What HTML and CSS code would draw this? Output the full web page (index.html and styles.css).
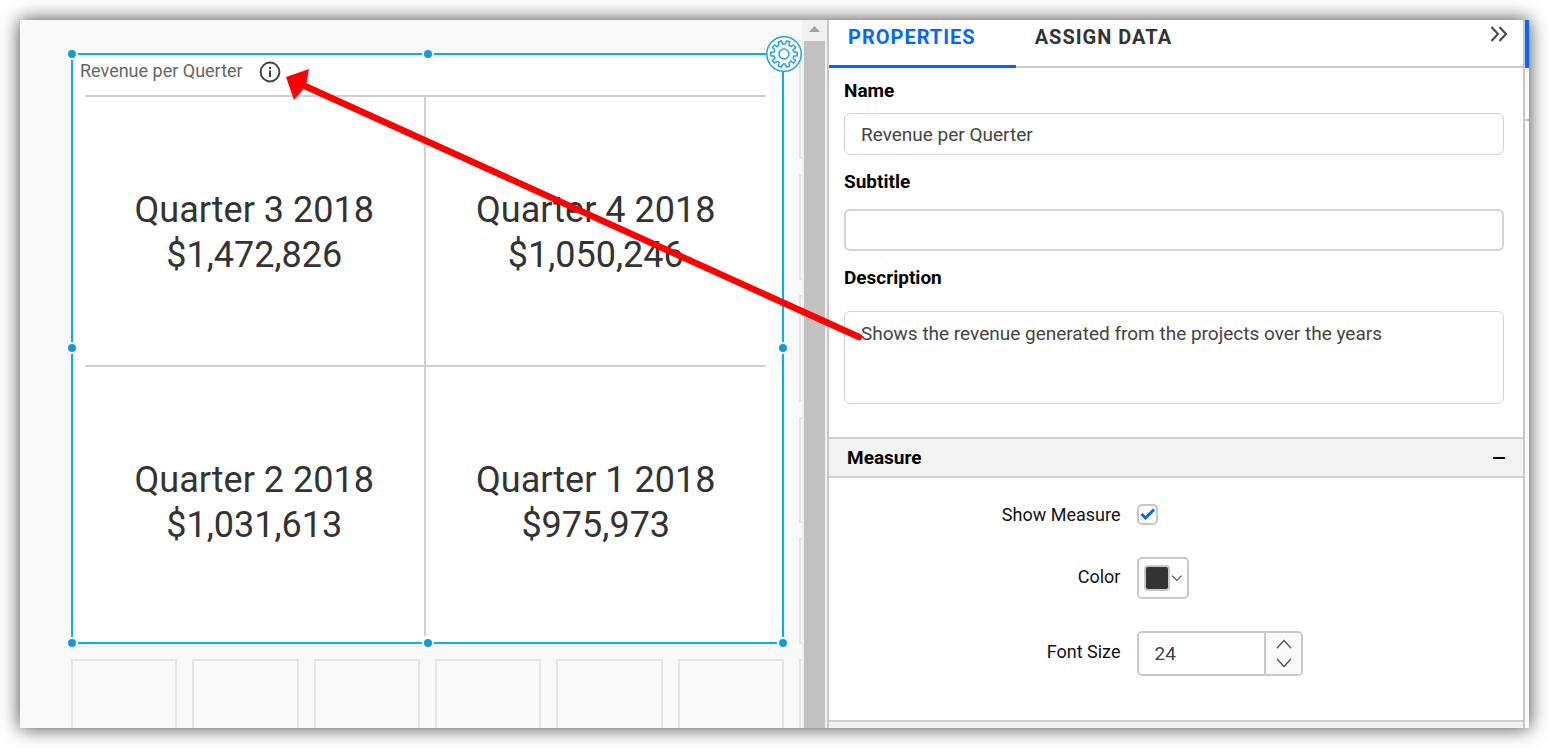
FILE: index.html
```html
<!DOCTYPE html>
<html lang="en">
<head>
<meta charset="utf-8">
<title>Dashboard Designer</title>
<link rel="stylesheet" href="styles.css">
</head>
<body>
<div class="frame">
  <main class="canvas">
    <div class="board">
      <section class="widget">
        <header class="widget-head">
          <h2 class="widget-title">Revenue per Querter</h2>
          <button class="icon-btn" type="button" aria-label="Description">
            <svg class="info-icon" viewBox="0 0 22 22"><circle cx="11" cy="11" r="9.4"/><path d="M11 9.5V16M11 6V8"/></svg>
          </button>
        </header>
        <div class="cards">
          <div class="card"><p>Quarter 3 2018</p><p>$1,472,826</p></div>
          <div class="card"><p>Quarter 4 2018</p><p>$1,050,246</p></div>
          <div class="card"><p>Quarter 2 2018</p><p>$1,031,613</p></div>
          <div class="card"><p>Quarter 1 2018</p><p>$975,973</p></div>
        </div>
        <span class="handle top left"></span>
        <span class="handle top center"></span>
        <span class="handle middle left"></span>
        <span class="handle middle right"></span>
        <span class="handle bottom left"></span>
        <span class="handle bottom center"></span>
        <span class="handle bottom right"></span>
        <button class="gear" type="button" aria-label="Widget settings">
          <svg viewBox="-18 -18 36 36">
            <defs><path id="tooth" d="M-1.900 -9.800 -1.700 -13.100H1.700L1.900 -9.800A10 10 0 0 1 4.230 -9.060"/></defs>
            <circle r="17.200"/><circle r="5"/>
            <use href="#tooth" transform="rotate(18)"/>
            <use href="#tooth" transform="rotate(54)"/>
            <use href="#tooth" transform="rotate(90)"/>
            <use href="#tooth" transform="rotate(126)"/>
            <use href="#tooth" transform="rotate(162)"/>
            <use href="#tooth" transform="rotate(198)"/>
            <use href="#tooth" transform="rotate(234)"/>
            <use href="#tooth" transform="rotate(270)"/>
            <use href="#tooth" transform="rotate(306)"/>
            <use href="#tooth" transform="rotate(342)"/>
          </svg>
        </button>
      </section>
      <div class="cell edge"></div>
      <div class="cell edge"></div>
      <div class="cell edge"></div>
      <div class="cell edge"></div>
      <div class="cell edge"></div>
      <div class="cell last"></div>
      <div class="cell last"></div>
      <div class="cell last"></div>
      <div class="cell last"></div>
      <div class="cell last"></div>
      <div class="cell last"></div>
      <div class="cell last edge"></div>
    </div>
  </main>
  <div class="scrollbar">
    <svg class="scroll-up" viewBox="0 0 21 21"><path d="M5 12 10.500 6 16 12Z"/></svg>
    <div class="thumb"></div>
  </div>
  <aside class="panel">
    <nav class="tabs">
      <button class="tab active" type="button">PROPERTIES</button>
      <button class="tab" type="button">ASSIGN DATA</button>
      <button class="icon-btn collapse" type="button" aria-label="Collapse panel">
        <svg viewBox="0 0 18 16"><path d="M1.500 1 8 8 1.500 15M9.500 1 16 8 9.500 15"/></svg>
      </button>
    </nav>
    <form class="form">
      <label class="label" for="name">Name</label>
      <input class="field" id="name" type="text" value="Revenue per Querter">
      <label class="label" for="subtitle">Subtitle</label>
      <input class="field thick" id="subtitle" type="text">
      <label class="label roomy" for="description">Description</label>
      <textarea class="field area" id="description">Shows the revenue generated from the projects over the years</textarea>
    </form>
    <header class="section-head">
      <h3>Measure</h3>
      <button class="icon-btn" type="button" aria-label="Collapse section">
        <svg class="minus" viewBox="0 0 14 4"><path d="M1 2H13"/></svg>
      </button>
    </header>
    <div class="options">
      <label for="show">Show Measure</label>
      <span class="check">
        <input id="show" type="checkbox" checked>
        <svg viewBox="0 0 21 21"><path d="M4.500 10 8.500 14 17 5.500"/></svg>
      </span>
      <label class="raised" for="color">Color</label>
      <button class="color" id="color" type="button">
        <span class="swatch"></span>
        <svg viewBox="0 0 12 8"><path d="M1 1.500 6 6.500 11 1.500"/></svg>
      </button>
      <label class="raised" for="size">Font Size</label>
      <span class="spin">
        <input id="size" type="text" value="24">
        <span class="spin-buttons">
          <button type="button" aria-label="Increase"><svg viewBox="0 0 16 10"><path d="M1 9 8 1.500 15 9"/></svg></button>
          <button type="button" aria-label="Decrease"><svg viewBox="0 0 16 10"><path d="M1 1 8 8.500 15 1"/></svg></button>
        </span>
      </span>
    </div>
    <div class="next-section"></div>
  </aside>
  <div class="strip"><div class="strip-active"></div><div class="strip-item"></div></div>
  <svg class="arrow" viewBox="0 0 1509 708" preserveAspectRatio="none">
    <path class="arrow-line" d="M276 62 839 317"/>
    <path class="arrow-head" d="M266 57 289 49 286 66 274 80Z"/>
  </svg>
</div>
</body>
</html>
```
FILE: styles.css
```css
* { box-sizing: border-box; }

body {
  margin: 0;
  padding: 20px;
  background: #fff;
  color: #333;
  font-family: Roboto, "Liberation Sans", sans-serif;
}

h2, h3, p { margin: 0; }

button, input, textarea { font: inherit; color: inherit; }

svg { display: block; fill: none; }

.frame {
  position: relative;
  display: grid;
  grid-template-columns: minmax(0, 782fr) 25px minmax(0, 696fr) 6px;
  min-height: calc(100vh - 40px);
  background: #fff;
  box-shadow: 0 0 18px rgba(0, 0, 0, .75);
}

.icon-btn {
  padding: 0;
  border: 0;
  background: none;
}

/* Canvas */
.canvas {
  display: grid;
  padding: 33px 0 0 51px;
  overflow: hidden;
  background: #f9f9f9;
}

.board {
  display: grid;
  grid-template-columns: repeat(6, minmax(0, 1fr)) 3px;
  grid-template-rows: repeat(5, minmax(106px, 1fr)) 69px;
  gap: 15px;
}

.cell { border: 2px solid #e5e5e5; }
.cell.edge { grid-column: 7; border-right: 0; }
.cell.last { border-bottom: 0; }

.widget {
  position: relative;
  grid-column: 1 / 7;
  grid-row: 1 / 6;
  display: flex;
  flex-direction: column;
  border: 2px solid #00b4eb;
  background: #fff;
}

.widget-head {
  display: flex;
  align-items: center;
  gap: 16px;
  height: 34px;
  padding-left: 7px;
}

.widget-title {
  padding-bottom: 3px;
  color: #666;
  font-size: 18px;
  font-weight: 400;
}

.info-icon { width: 22px; height: 22px; stroke: #444; stroke-width: 2; }

.cards {
  flex: 1;
  display: grid;
  grid-template-columns: repeat(2, minmax(0, 1fr));
  grid-template-rows: repeat(2, minmax(0, 1fr));
  margin: 6px 16px 6px 12px;
}

.card {
  display: flex;
  flex-direction: column;
  justify-content: center;
  padding-top: 3px;
  border-top: 2px solid #d0d0d0;
  color: #333;
  font-size: 36px;
  line-height: 45px;
  text-align: center;
}

.card:nth-child(odd) { border-right: 2px solid #d0d0d0; }

.handle {
  position: absolute;
  width: 12px;
  height: 12px;
  border: 2px solid #fff;
  border-radius: 50%;
  background: #1499da;
}

.handle.top { top: -7px; }
.handle.middle { top: calc(50% - 6px); }
.handle.bottom { bottom: -7px; }
.handle.left { left: -7px; }
.handle.center { left: calc(50% - 6px); }
.handle.right { right: -7px; }

.gear {
  position: absolute;
  top: -19px;
  right: -20px;
  width: 36px;
  height: 36px;
  padding: 0;
  border: 0;
  border-radius: 50%;
  background: #fff;
}

.gear svg { stroke: #23a3dd; stroke-width: 1.5; }

/* Scrollbar */
.scrollbar {
  display: flex;
  flex-direction: column;
  padding: 0 2px;
  background: #f1f1f1;
}

.scroll-up { height: 21px; fill: #a3a3a3; }
.thumb { flex: 1; background: #c1c1c1; }

/* Properties panel */
.panel { border-left: 2px solid #c8c8c8; }

.tabs {
  display: flex;
  height: 48px;
  border-bottom: 2px solid #ccc;
}

.tab {
  height: 48px;
  padding: 0 19px 12px;
  border: 0;
  border-bottom: 3px solid transparent;
  background: none;
  font-size: 20px;
  font-weight: 700;
  letter-spacing: 1px;
}

.tab.active {
  padding-right: 40px;
  border-color: #0565ff;
  color: #0565ff;
}

.collapse {
  align-self: flex-start;
  margin: 6px 15px 0 auto;
}

.collapse svg { width: 18px; height: 16px; stroke: #444; stroke-width: 2; }

.form {
  display: flex;
  flex-direction: column;
  padding: 11px 19px 33px 15px;
}

.label {
  margin-bottom: 10px;
  color: #000;
  font-size: 19px;
  font-weight: 700;
  line-height: 24px;
}

.field {
  height: 42px;
  margin-bottom: 15px;
  padding: 0 16px;
  border: 1px solid #d3d3d3;
  border-radius: 6px;
  background: #fff;
  color: #444;
  font-size: 19px;
}

.label + .thick { margin-top: 5px; }
.thick { border-width: 2px; }
.label.roomy { margin-bottom: 21px; }

.area {
  height: 93px;
  margin: 0;
  padding-top: 10px;
  line-height: 24px;
  resize: none;
}

.section-head {
  display: flex;
  align-items: center;
  justify-content: space-between;
  height: 41px;
  padding: 0 17px 0 18px;
  border: solid #d0d0d0;
  border-width: 2px 0;
  background: #f3f3f3;
  color: #000;
}

.section-head h3 { font-size: 19px; font-weight: 700; }

.minus { width: 14px; height: 4px; stroke: #000; stroke-width: 2; }

.options {
  display: grid;
  grid-template-columns: 42% 1fr;
  align-items: center;
  gap: 32px 17px;
  padding: 26px 0 44px;
  color: #111;
  font-size: 18px;
}

.options label { text-align: right; line-height: 21px; }
.options .raised { padding-bottom: 4px; }

.check { position: relative; width: 21px; height: 21px; }

.check input {
  display: block;
  width: 21px;
  height: 21px;
  margin: 0;
  appearance: none;
  border: 2px solid #c8c8c8;
  border-radius: 5px;
  background: #fff;
}

.check svg {
  position: absolute;
  inset: 0;
  visibility: hidden;
  pointer-events: none;
  stroke: #0565ff;
  stroke-width: 3;
}

.check input:checked + svg { visibility: visible; }

.color {
  display: flex;
  align-items: center;
  gap: 1px;
  width: 52px;
  height: 42px;
  padding: 0 5px;
  border: 2px solid #c8c8c8;
  border-radius: 5px;
  background: #fff;
}

.swatch {
  width: 26px;
  height: 26px;
  border: 2px solid #c8c8c8;
  border-radius: 4px;
  background: #333;
}

.color svg { width: 12px; height: 8px; stroke: #555; stroke-width: 1.2; }

.spin {
  display: flex;
  width: 166px;
  height: 45px;
  overflow: hidden;
  border: 2px solid #c8c8c8;
  border-radius: 5px;
}

.spin input {
  flex: 1;
  min-width: 0;
  padding: 0 15px;
  border: 0;
  color: #444;
  font-size: 19px;
}

.spin-buttons {
  display: flex;
  flex-direction: column;
  width: 37px;
  padding: 2px 0;
  border-left: 2px solid #c8c8c8;
  background: #fafafa;
}

.spin-buttons button {
  flex: 1;
  display: flex;
  align-items: center;
  justify-content: center;
  padding: 0;
  border: 0;
  background: none;
}

.spin-buttons svg { width: 16px; height: 10px; stroke: #555; stroke-width: 1.4; }

.next-section {
  height: 8px;
  border-top: 2px solid #d0d0d0;
  background: #f3f3f3;
}

/* Right strip */
.strip { border-left: 2px solid #c8c8c8; background: #fafafa; }
.strip-active { height: 48px; background: #0565ff; }
.strip-item { height: 53px; border-bottom: 2px solid #c8c8c8; }

/* Callout arrow over the whole frame */
.arrow {
  position: absolute;
  inset: 0;
  width: 100%;
  height: 100%;
  pointer-events: none;
}

.arrow-line { stroke: #f00; stroke-width: 6.5; stroke-linecap: round; }
.arrow-head { fill: #f00; }
```
